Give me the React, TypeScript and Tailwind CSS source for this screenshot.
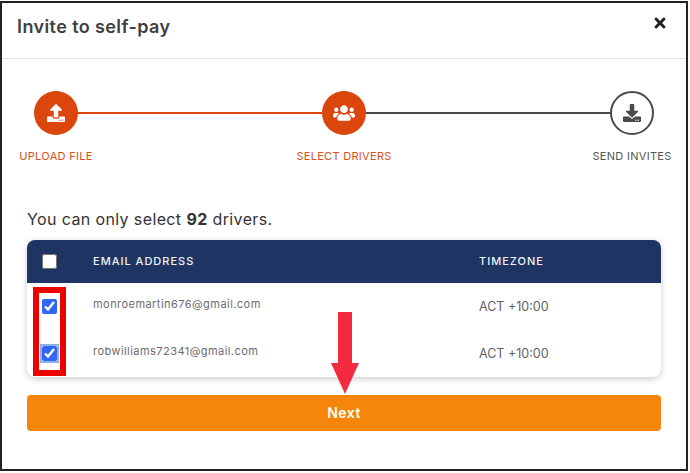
import { FaDownload, FaTimes, FaUpload, FaUsers } from 'react-icons/fa';

const drivers = [
  { email: 'monroemartin676@gmail.com', timezone: 'ACT +10:00', focused: false },
  { email: 'robwilliams72341@gmail.com', timezone: 'ACT +10:00', focused: true },
];

export default function App() {
  return (
    <div className="h-[473px] w-[690px] bg-white pt-px pr-[2px] pb-[2px] font-['Inter','Liberation_Sans',sans-serif]">
      <div className="relative flex h-full flex-col border-2 border-[#222] bg-white">
        {/* Header */}
        <header className="flex h-[56px] shrink-0 items-start justify-between border-b border-[#e0e0ea] pr-[18px] pl-[15px]">
          <h1 className="mt-[11px] text-[18px] leading-[26px] font-semibold tracking-[0.4px] text-[#3f3f3f]">Invite to self-pay</h1>
          <FaTimes className="mt-[12px] text-[16px] text-[#222]" />
        </header>

        {/* Stepper */}
        <div className="mt-[32px] flex items-center px-[32px]">
          <div className="flex h-[44px] w-[44px] shrink-0 items-center justify-center rounded-full bg-[#db460d] text-white">
            <FaUpload className="text-[18px]" />
          </div>
          <div className="h-[2px] flex-1 bg-[#db460d]" />
          <div className="flex h-[44px] w-[44px] shrink-0 items-center justify-center rounded-full bg-[#db460d] text-white">
            <FaUsers className="text-[22px]" />
          </div>
          <div className="h-[2px] flex-1 bg-[#4a4a4a]" />
          <div className="flex h-[44px] w-[44px] shrink-0 items-center justify-center rounded-full border-2 border-[#4a4a4a] text-[#4a4a4a]">
            <FaDownload className="text-[18px]" />
          </div>
        </div>
        <div className="mt-[14px] flex justify-between px-[4px] text-[11px] leading-[14px] tracking-[0.3px]">
          <span className="w-[100px] text-center text-[#db4f1d]">UPLOAD FILE</span>
          <span className="w-[100px] text-center whitespace-nowrap text-[#db4f1d]">SELECT DRIVERS</span>
          <span className="w-[100px] text-center whitespace-nowrap text-[#555]">SEND INVITES</span>
        </div>

        {/* Selection hint */}
        <p className="mt-[46px] ml-[25px] text-[16px] leading-[20px] tracking-[0.38px] text-[#333]">
          You can only select <strong className="font-bold">92</strong> drivers.
        </p>

        {/* Table */}
        <div className="mx-[25px] mt-[11px] overflow-hidden rounded-lg bg-white shadow-[0_2px_6px_rgba(0,0,0,0.2)]">
          <div className="flex h-[43px] items-center bg-[#1e3563] text-[11px] font-medium tracking-[1px] text-[#f0f2f6]">
            <div className="flex w-[66px] pl-[15px]">
              <input type="checkbox" className="h-[15px] w-[15px]" />
            </div>
            <div className="w-[386px]">EMAIL ADDRESS</div>
            <div>TIMEZONE</div>
          </div>
          <div className="h-[94px]">
            {drivers.map((driver) => (
              <div key={driver.email} className="flex h-[47px] items-center">
                <div className="flex w-[66px] pl-[15px]">
                  <input
                    type="checkbox"
                    defaultChecked
                    className={
                      driver.focused
                        ? 'h-[15px] w-[15px] accent-[#2f66f5] outline-2 outline-[#8fb1e6]'
                        : 'h-[15px] w-[15px] accent-[#2f66f5]'
                    }
                  />
                </div>
                <div className="mb-[4px] w-[386px] text-[11px] tracking-[0.45px] text-[#6b6b73]">{driver.email}</div>
                <div className="pt-[2px] text-[12.5px] text-[#5f5f66]">{driver.timezone}</div>
              </div>
            ))}
          </div>
        </div>

        <button
          type="button"
          className="mx-[25px] mt-[18px] h-[36px] rounded bg-[#f5860b] pb-[2px] text-[14px] font-semibold tracking-[0.5px] text-white"
        >
          Next
        </button>

        {/* Annotation: red box round the checkboxes */}
        <div className="absolute top-[284px] left-[31px] h-[89px] w-[33px] border-[6px] border-[#ee0000]" />

        {/* Annotation: arrow towards the button */}
        <svg className="absolute top-[309px] left-[328px]" width="30" height="84" viewBox="0 0 30 84">
          <polygon points="8,0 22,0 22,51 29,51 15,82 1,51 8,51" fill="#f42a41" />
        </svg>
      </div>
    </div>
  );
}
